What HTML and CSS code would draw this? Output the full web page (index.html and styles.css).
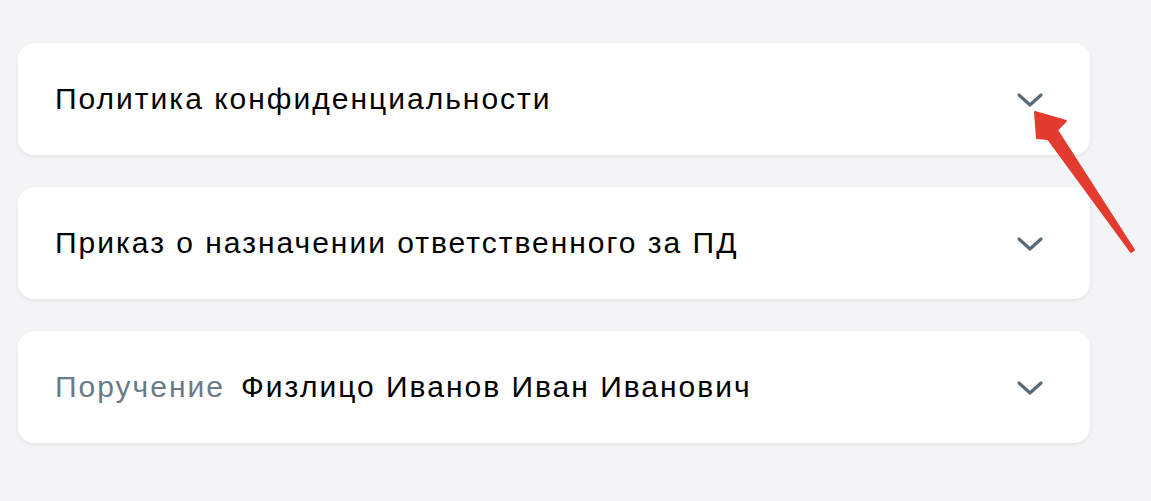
FILE: index.html
```html
<!DOCTYPE html>
<html lang="ru">
<head>
<meta charset="utf-8">
<link rel="stylesheet" href="styles.css">
</head>
<body>
<div class="list">
  <div class="card">
    <div class="title">Политика конфиденциальности</div>
    <svg class="chev" viewBox="0 0 26 14" width="26" height="14"><path d="M2 2 L13 12 L24 2" fill="none" stroke="#5b6b79" stroke-width="3.2" stroke-linecap="round" stroke-linejoin="round"/></svg>
  </div>
  <div class="card">
    <div class="title">Приказ о назначении ответственного за ПД</div>
    <svg class="chev" viewBox="0 0 26 14" width="26" height="14"><path d="M2 2 L13 12 L24 2" fill="none" stroke="#5b6b79" stroke-width="3.2" stroke-linecap="round" stroke-linejoin="round"/></svg>
  </div>
  <div class="card">
    <div class="title"><span class="label">Поручение</span><span>Физлицо Иванов Иван Иванович</span></div>
    <svg class="chev" viewBox="0 0 26 14" width="26" height="14"><path d="M2 2 L13 12 L24 2" fill="none" stroke="#5b6b79" stroke-width="3.2" stroke-linecap="round" stroke-linejoin="round"/></svg>
  </div>
</div>
<svg class="arrow" width="1151" height="501" viewBox="0 0 1151 501">
  <path d="M1035 112 L1066 121 L1057 130 L1134 250 L1131 252 L1048 139 L1037 138 Z" fill="#e33b2e" stroke="#e33b2e" stroke-width="2" stroke-linejoin="round"/>
</svg>
</body>
</html>
```
FILE: styles.css
```css
html, body {
  margin: 0;
  padding: 0;
  background: #f3f4f6;
}
body {
  font-family: "Liberation Sans", Arial, sans-serif;
  position: relative;
  width: 1151px;
  height: 501px;
  overflow: hidden;
}
.list {
  padding: 43px 61px 0 18px;
  display: flex;
  flex-direction: column;
  gap: 32px;
}
.card {
  height: 112px;
  background: #fff;
  border-radius: 16px;
  box-shadow: 0 2px 4px rgba(0, 0, 0, 0.06);
  display: flex;
  align-items: center;
  justify-content: space-between;
  padding: 0 47px 0 37px;
  box-sizing: border-box;
}
.title {
  font-size: 30px;
  color: #000;
  letter-spacing: 2px;
  display: flex;
  gap: 16px;
}
.label {
  color: #6b7a87;
}
.chev {
  display: block;
  margin-top: 2px;
}
.arrow {
  position: absolute;
  left: 0;
  top: 0;
  pointer-events: none;
}
```
